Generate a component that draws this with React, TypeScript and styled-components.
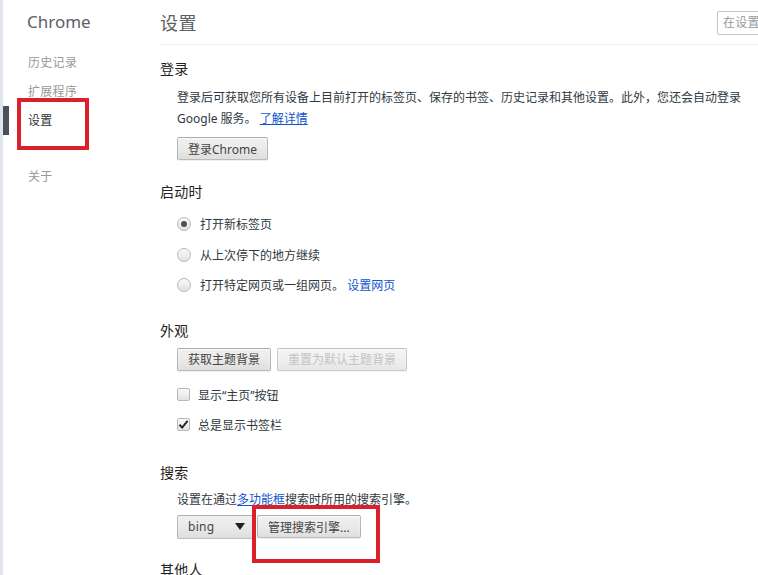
import React from 'react'
import styled, { createGlobalStyle } from 'styled-components'

const GlobalStyle = createGlobalStyle`
  html, body {
    margin: 0;
    padding: 0;
    background: #fff;
    overflow: hidden;
  }
  body {
    font-family: "Noto Sans", "Noto Sans CJK SC", sans-serif;
    color: #303942;
  }
`

const Page = styled.div`
  position: relative;
  display: flex;
  width: 758px;
  height: 575px;
  overflow: hidden;
`

const Sidebar = styled.nav`
  flex-shrink: 0;
  width: 157px;
  border-left: 3px solid #dfe4ed;
`

const Brand = styled.div`
  height: 44px;
  line-height: 44px;
  padding-left: 24px;
  font-size: 17px;
  color: #5c6166;
`

const NavList = styled.ul`
  list-style: none;
  margin: 4px 0 0;
  padding: 0;
`

const NavItem = styled.li<{ $active?: boolean; $gap?: boolean }>`
  height: 29px;
  line-height: 29px;
  margin-top: ${({ $gap }) => ($gap ? '27px' : '0')};
  padding-left: 19px;
  border-left: 6px solid ${({ $active }) => ($active ? '#4a515c' : 'transparent')};
  font-size: 12px;
  letter-spacing: 0.3px;
  color: ${({ $active }) => ($active ? '#333' : '#999')};
`

const Main = styled.main`
  flex-shrink: 0;
  width: 717px;
`

const Header = styled.header`
  display: flex;
  align-items: center;
  height: 44px;
  border-bottom: 1px solid #eeeeee;
`

const Title = styled.h1`
  flex: 1;
  margin: 0;
  font-size: 18px;
  font-weight: normal;
  color: #5c6166;
  letter-spacing: 0.5px;
`

const SearchInput = styled.div`
  box-sizing: border-box;
  width: 160px;
  height: 24px;
  margin-top: 1px;
  padding-left: 5px;
  line-height: 22px;
  border: 1px solid #c4c4c4;
  border-radius: 2px;
  font-size: 12px;
  color: #999;
  letter-spacing: 0.3px;
`

const Section = styled.section<{ $pt: number }>`
  padding-top: ${({ $pt }) => $pt}px;
`

const SectionTitle = styled.h3`
  margin: 0 0 7px;
  height: 20px;
  line-height: 20px;
  font-size: 14px;
  font-weight: normal;
  color: #222;
  letter-spacing: 0.2px;
`

const Body = styled.div`
  padding-left: 17px;
  font-size: 12px;
`

const Text = styled.p<{ $lh?: number; $pt?: number }>`
  margin: 0;
  padding-top: ${({ $pt }) => $pt ?? 0}px;
  line-height: ${({ $lh }) => $lh ?? 21}px;
  color: #303942;
`

const Link = styled.a<{ $plain?: boolean }>`
  color: #1155cc;
  text-decoration: ${({ $plain }) => ($plain ? 'none' : 'underline')};
  cursor: pointer;
`

const ButtonRow = styled.div<{ $top?: number }>`
  display: flex;
  gap: 6px;
  margin-top: ${({ $top }) => $top ?? 0}px;
`

const Button = styled.button<{ $disabled?: boolean }>`
  box-sizing: border-box;
  height: 23px;
  padding: 0 10px;
  border: 1px solid rgba(0, 0, 0, 0.22);
  border-radius: 2px;
  background: linear-gradient(#f0f0f0, #ececec 40%, #dedede);
  box-shadow: 0 1px 0 rgba(0, 0, 0, 0.06), inset 0 1px 2px rgba(255, 255, 255, 0.75);
  font: inherit;
  color: ${({ $disabled }) => ($disabled ? '#b0b0b0' : '#444')};
  opacity: ${({ $disabled }) => ($disabled ? 0.75 : 1)};
`

const OptionList = styled.div<{ $top?: number }>`
  margin-top: ${({ $top }) => $top ?? 0}px;
`

const OptionRow = styled.label<{ $h?: number }>`
  display: flex;
  align-items: center;
  height: ${({ $h }) => $h ?? 30}px;
  color: #303942;
`

const Radio = styled.span<{ $checked?: boolean }>`
  display: flex;
  align-items: center;
  justify-content: center;
  box-sizing: border-box;
  width: 14px;
  height: 14px;
  margin-right: 9px;
  border: 1px solid #b8b8b8;
  border-radius: 50%;
  background: linear-gradient(#fafafa, #e2e2e2);

  &::after {
    content: '';
    display: ${({ $checked }) => ($checked ? 'block' : 'none')};
    width: 6px;
    height: 6px;
    border-radius: 50%;
    background: #505050;
  }
`

const Checkbox = styled.span`
  display: flex;
  align-items: center;
  justify-content: center;
  box-sizing: border-box;
  width: 13px;
  height: 13px;
  margin-right: 8px;
  border: 1px solid #b8b8b8;
  border-radius: 2px;
  background: linear-gradient(#fafafa, #e2e2e2);
`

const SelectBox = styled.div`
  box-sizing: border-box;
  display: flex;
  align-items: center;
  justify-content: space-between;
  width: 76px;
  height: 24px;
  padding: 0 7px 0 10px;
  border: 1px solid rgba(0, 0, 0, 0.2);
  border-radius: 2px;
  background: linear-gradient(#f0f0f0, #ececec 40%, #dedede);
  color: #444;
  letter-spacing: 0.3px;
`

const ControlRow = styled.div`
  display: flex;
  align-items: center;
  gap: 4px;
  margin-top: 5px;
`

const Mark = styled.div<{ $x: number; $y: number; $w: number; $h: number }>`
  position: absolute;
  left: ${({ $x }) => $x}px;
  top: ${({ $y }) => $y}px;
  width: ${({ $w }) => $w}px;
  height: ${({ $h }) => $h}px;
  box-sizing: border-box;
  border: 4px solid #d9202b;
  pointer-events: none;
`

const CheckIcon = () => (
  <svg width="11" height="11" viewBox="0 0 11 11">
    <path d="M1.5 5.8 L4.2 8.6 L9.6 1.8" fill="none" stroke="#222" strokeWidth="2" />
  </svg>
)

const ArrowIcon = () => (
  <svg width="10" height="7" viewBox="0 0 10 7">
    <path d="M0 0 H10 L5 7 Z" fill="#222" />
  </svg>
)

const App = () => {
  return (
    <>
      <GlobalStyle />
      <Page>
        <Sidebar>
          <Brand>Chrome</Brand>
          <NavList>
            <NavItem>历史记录</NavItem>
            <NavItem>扩展程序</NavItem>
            <NavItem $active>设置</NavItem>
            <NavItem $gap>关于</NavItem>
          </NavList>
        </Sidebar>

        <Main>
          <Header>
            <Title>设置</Title>
            <SearchInput>在设置中搜索</SearchInput>
          </Header>

          <Section $pt={14}>
            <SectionTitle>登录</SectionTitle>
            <Body>
              <Text $pt={1}>
                登录后可获取您所有设备上目前打开的标签页、保存的书签、历史记录和其他设置。此外，您还会自动登录
              </Text>
              <Text>
                Google 服务。 <Link>了解详情</Link>
              </Text>
              <ButtonRow $top={8}>
                <Button>登录Chrome</Button>
              </ButtonRow>
            </Body>
          </Section>

          <Section $pt={22}>
            <SectionTitle>启动时</SectionTitle>
            <Body>
              <OptionList $top={1}>
                <OptionRow $h={30.5}>
                  <Radio $checked />
                  打开新标签页
                </OptionRow>
                <OptionRow $h={30.5}>
                  <Radio />
                  从上次停下的地方继续
                </OptionRow>
                <OptionRow $h={30.5}>
                  <Radio />
                  打开特定网页或一组网页。&nbsp;
                  <Link $plain>设置网页</Link>
                </OptionRow>
              </OptionList>
            </Body>
          </Section>

          <Section $pt={20}>
            <SectionTitle>外观</SectionTitle>
            <Body>
              <ButtonRow $top={3}>
                <Button>获取主题背景</Button>
                <Button $disabled>重置为默认主题背景</Button>
              </ButtonRow>
              <OptionList $top={9}>
                <OptionRow>
                  <Checkbox />
                  显示“主页”按钮
                </OptionRow>
                <OptionRow>
                  <Checkbox>
                    <CheckIcon />
                  </Checkbox>
                  总是显示书签栏
                </OptionRow>
              </OptionList>
            </Body>
          </Section>

          <Section $pt={23}>
            <SectionTitle>搜索</SectionTitle>
            <Body>
              <Text $lh={20}>
                设置在通过<Link>多功能框</Link>搜索时所用的搜索引擎。
              </Text>
              <ControlRow>
                <SelectBox>
                  bing
                  <ArrowIcon />
                </SelectBox>
                <Button>管理搜索引擎...</Button>
              </ControlRow>
            </Body>
          </Section>

          <Section $pt={21}>
            <SectionTitle>其他人</SectionTitle>
          </Section>
        </Main>

        <Mark $x={17} $y={98} $w={72} $h={52} />
        <Mark $x={252} $y={505} $w={128} $h={58} />
      </Page>
    </>
  )
}

export default App
